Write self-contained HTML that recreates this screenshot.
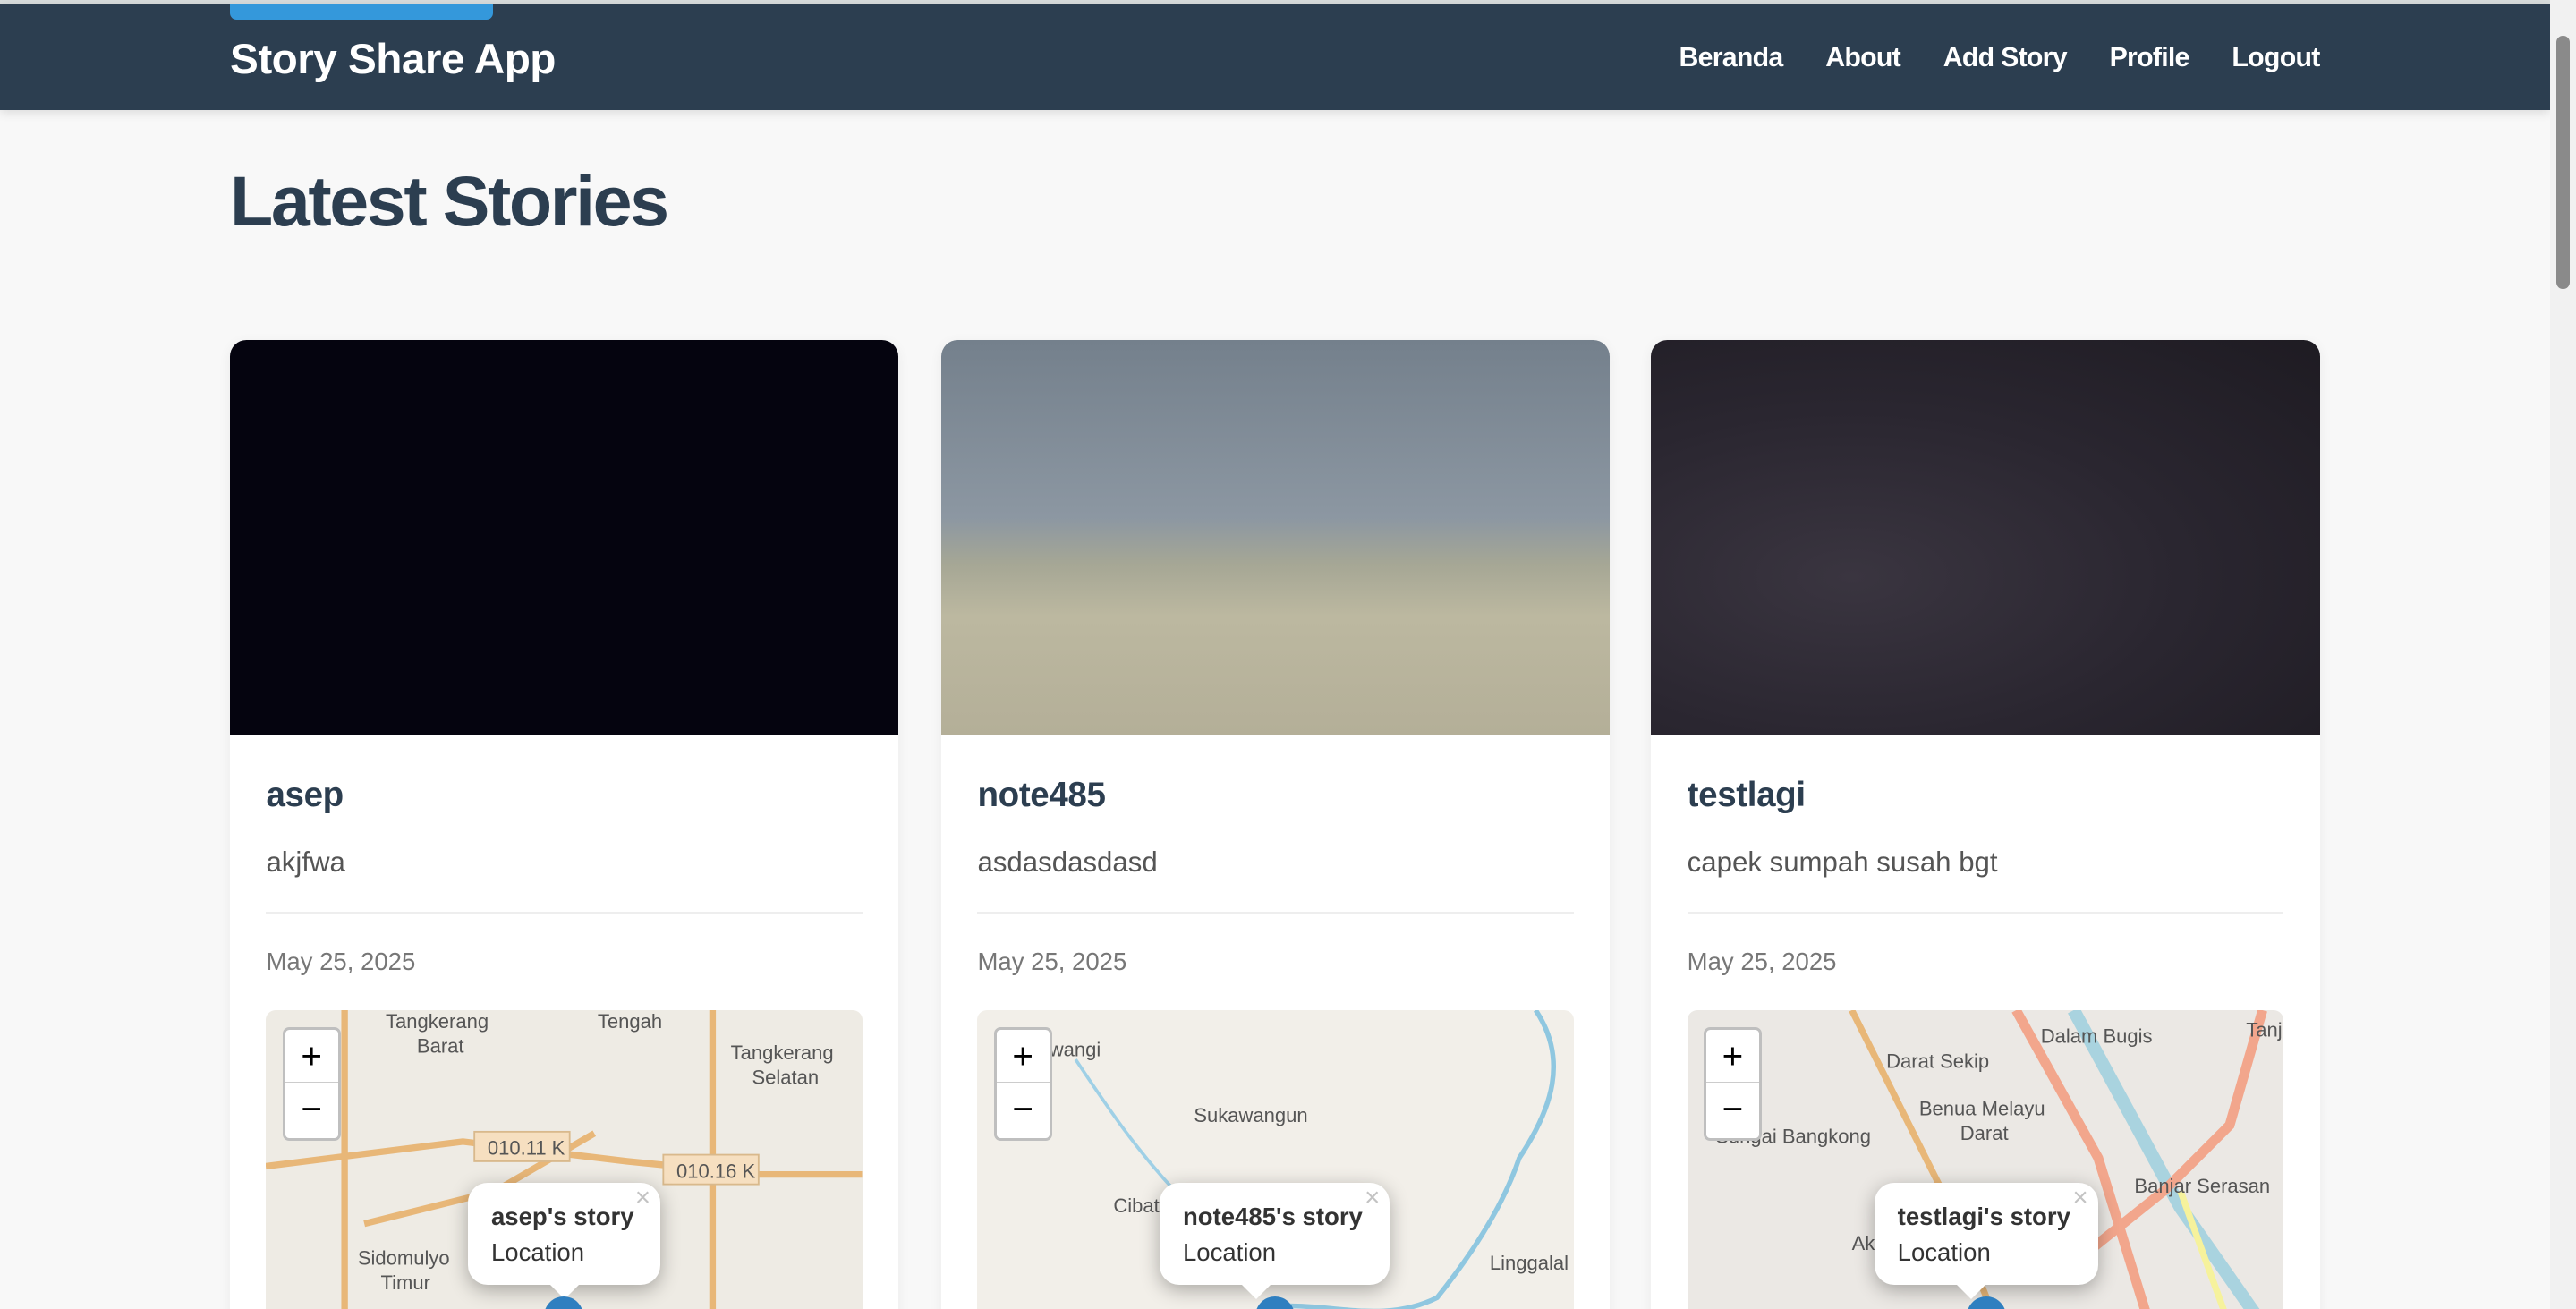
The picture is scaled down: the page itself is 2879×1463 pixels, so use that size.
<!DOCTYPE html>
<html><head><meta charset="utf-8"><style>
html,body{margin:0;padding:0;width:2879px;height:1463px;overflow:hidden;background:#f8f8f8}
#w{zoom:1.8361;width:1568px;height:797px;position:relative;overflow:hidden;font-family:"Liberation Sans",sans-serif;background:#f8f8f8}
.topline{position:absolute;left:0;top:0;width:1552px;height:2px;background:#d8dcdc}
header{position:absolute;left:0;top:2px;width:1552px;height:65px;background:#2c3e50;box-shadow:0 2px 6px rgba(0,0,0,.12)}
.tab{position:absolute;left:140px;top:2px;width:160px;height:10px;background:#3498db;border-radius:0 0 4px 4px}
.brand{position:absolute;left:140px;top:19px;color:#fff;font-size:26px;font-weight:bold;letter-spacing:-.3px}
nav{position:absolute;right:140px;top:24px;color:#fff;font-size:16.5px;font-weight:bold;letter-spacing:-.4px}
nav span{margin-left:26px}
.sb{position:absolute;left:1552px;top:0;width:16px;height:797px;background:#f1f1f1}
.sb i{position:absolute;left:4px;top:22px;width:8px;height:154px;background:#8a8a8a;border-radius:4px}
h1{position:absolute;left:140px;top:98px;margin:0;font-size:43px;color:#2c3e50;font-weight:bold;letter-spacing:-1.3px}
.card{position:absolute;top:207px;width:407px;height:620px;background:#fff;border-radius:10px;overflow:hidden;box-shadow:0 2px 8px rgba(0,0,0,.06)}
.img{height:240px}
.nm{position:absolute;left:22px;top:265px;font-size:21px;color:#2c3e50;font-weight:bold;letter-spacing:-.2px}
.ds{position:absolute;left:22px;top:308px;font-size:17px;color:#555}
.hr{position:absolute;left:22px;right:22px;top:348px;height:1px;background:#eee}
.dt{position:absolute;left:22px;top:370px;font-size:15px;color:#777}
.map{position:absolute;left:22px;top:408px;width:363px;height:220px;background:#eeebe4;border-radius:6px;overflow:hidden}
.zc{position:absolute;left:10px;top:10px;width:32px;height:66px;background:#fff;border:2px solid rgba(0,0,0,.25);border-radius:4px;font-size:22px;text-align:center;line-height:32px;color:#000}
.zc div:first-child{border-bottom:1px solid #ccc}
.pop{position:absolute;top:105px;width:117px;height:62px;background:#fff;border-radius:12px;box-shadow:0 3px 12px rgba(0,0,0,.3)}
.pop b{position:absolute;left:14px;top:12px;font-size:15px;color:#333;white-space:nowrap}
.pop span{position:absolute;left:14px;top:34px;font-size:15px;color:#333}
.pop em{position:absolute;right:6px;top:0;font-style:normal;color:#c3c3c3;font-size:16px}
.pop:after{content:"";position:absolute;left:50px;bottom:-9px;border:9px solid transparent;border-top-color:#fff;border-bottom:0}
.mk{position:absolute;top:174px;width:24px;height:24px;border-radius:50%;background:#2f7fc0}
</style></head><body><div id="w">
<div class="topline"></div>
<header><div class="brand">Story Share App</div><nav><span>Beranda</span><span>About</span><span>Add Story</span><span>Profile</span><span>Logout</span></nav></header>
<div class="tab"></div>
<h1>Latest Stories</h1>

<div class="card" style="left:140px"><div class="img" style="background:#05040f"></div>
<div class="nm">asep</div><div class="ds">akjfwa</div><div class="hr"></div><div class="dt">May 25, 2025</div>
<div class="map"><svg width="363" height="220" style="position:absolute;left:0;top:0">
<path d="M48 0V220M272 0V220M0 95L120 80L220 92L300 100L363 100" stroke="#e8b778" stroke-width="4" fill="none"/>
<path d="M60 130L140 110L200 75" stroke="#e8b778" stroke-width="4" fill="none"/>
<g font-size="12" fill="#555"><text x="73" y="11">Tangkerang</text><text x="92" y="26">Barat</text><text x="202" y="11">Tengah</text><text x="283" y="30">Tangkerang</text><text x="296" y="45">Selatan</text><text x="56" y="155">Sidomulyo</text><text x="70" y="170">Timur</text></g>
<rect x="127" y="74" width="58" height="18" fill="#f6dfc0" stroke="#d9b98c"/><text x="135" y="88" font-size="12" fill="#555">010.11 K</text>
<rect x="242" y="88" width="58" height="18" fill="#f6dfc0" stroke="#d9b98c"/><text x="250" y="102" font-size="12" fill="#555">010.16 K</text></svg>
<div class="zc"><div>+</div><div>−</div></div>
<div class="pop" style="left:123px"><b>asep's story</b><span>Location</span><em>×</em></div><div class="mk" style="left:169px"></div></div></div>

<div class="card" style="left:573px"><div class="img" style="background:linear-gradient(180deg,#74808c 0%,#8c97a2 45%,#a6a795 57%,#bcb8a0 70%,#b4af98 100%)"></div>
<div class="nm">note485</div><div class="ds">asdasdasdasd</div><div class="hr"></div><div class="dt">May 25, 2025</div>
<div class="map" style="background:#f2efe9"><svg width="363" height="220" style="position:absolute;left:0;top:0">
<path d="M340 0C360 30 350 60 330 90C320 120 300 150 280 175C250 190 220 180 190 180" stroke="#8fc7e0" stroke-width="3" fill="none"/>
<path d="M60 30C80 60 100 90 130 120C150 140 180 150 200 160" stroke="#9fd0e6" stroke-width="2" fill="none"/>
<g font-size="12" fill="#555"><text x="44" y="28">wangi</text><text x="132" y="68">Sukawangun</text><text x="83" y="123">Cibat</text><text x="312" y="158">Linggalal</text></g></svg>
<div class="zc"><div>+</div><div>−</div></div>
<div class="pop" style="left:111px;width:140px"><b>note485's story</b><span>Location</span><em>×</em></div><div class="mk" style="left:169px"></div></div></div>

<div class="card" style="left:1005px"><div class="img" style="background:radial-gradient(ellipse at 30% 60%,#3a3540 0%,#2a2630 50%,#1e1b22 100%)"></div>
<div class="nm">testlagi</div><div class="ds">capek sumpah susah bgt</div><div class="hr"></div><div class="dt">May 25, 2025</div>
<div class="map" style="background:#ebe8e4"><svg width="363" height="220" style="position:absolute;left:0;top:0">
<path d="M200 0L250 90L290 220" stroke="#f2a68c" stroke-width="6" fill="none"/>
<path d="M235 0L300 120L363 210" stroke="#a9d3df" stroke-width="8" fill="none"/>
<path d="M240 150L290 110L330 70L350 0" stroke="#f2a68c" stroke-width="6" fill="none"/>
<path d="M100 0L160 120L200 220" stroke="#e8b778" stroke-width="4" fill="none"/>
<path d="M300 110L340 220" stroke="#f6f29c" stroke-width="4" fill="none"/>
<g font-size="12" fill="#555"><text x="215" y="20">Dalam Bugis</text><text x="121" y="35">Darat Sekip</text><text x="141" y="64">Benua Melayu</text><text x="166" y="79">Darat</text><text x="17" y="81">Sungai Bangkong</text><text x="272" y="111">Banjar Serasan</text><text x="100" y="146">Akca</text><text x="340" y="16">Tanj</text></g></svg>
<div class="zc"><div>+</div><div>−</div></div>
<div class="pop" style="left:114px;width:136px"><b>testlagi's story</b><span>Location</span><em>×</em></div><div class="mk" style="left:170px"></div></div></div>

<div class="sb"><i></i></div>
</div></body></html>
